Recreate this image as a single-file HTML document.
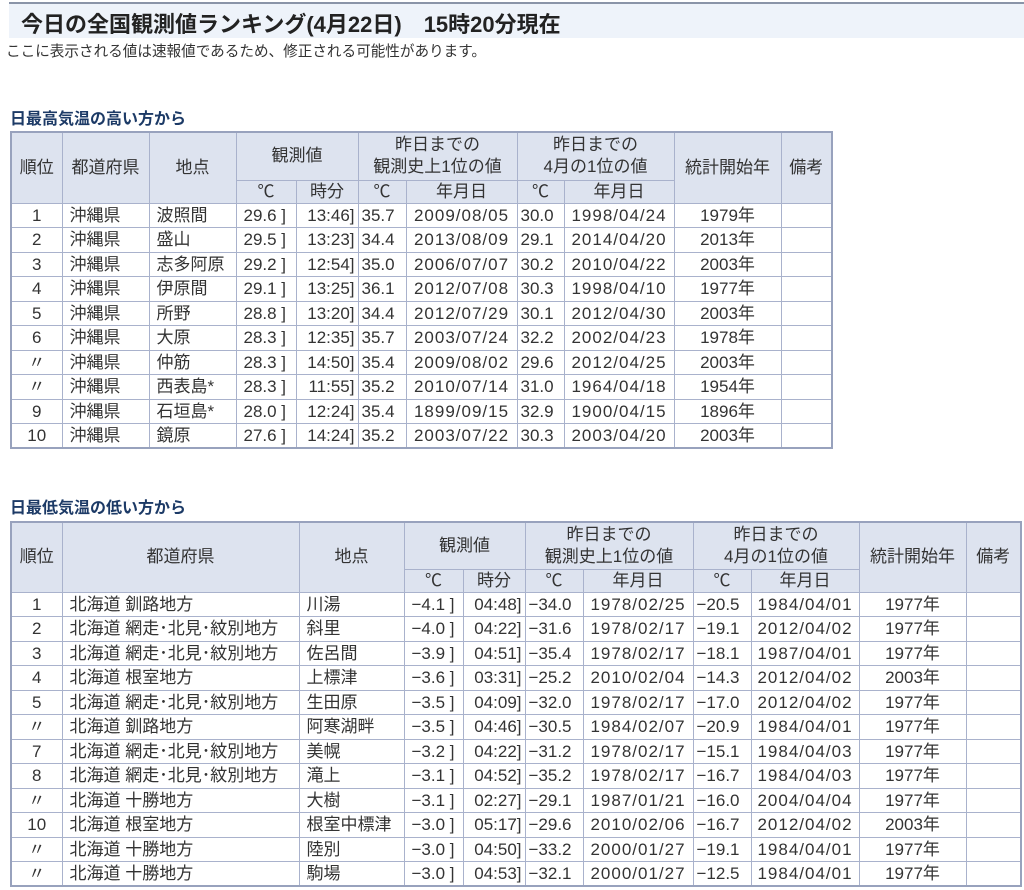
<!DOCTYPE html>
<html><head><meta charset="utf-8"><style>
body{margin:0;background:#fff;font-family:"Liberation Sans","Noto Sans CJK JP",sans-serif;color:#333;width:1024px;height:890px;overflow:hidden;position:relative}
.hd{position:absolute;left:9px;top:2px;width:1015px;height:36px;background:#eef3fa;border-top:2px solid #8a94a8;box-sizing:border-box}
.hd span{position:absolute;left:12px;top:3px;font-size:22px;font-weight:bold;color:#222;white-space:nowrap}
.note{position:absolute;left:6px;top:40px;font-size:14.6px;white-space:nowrap}
.st{position:absolute;left:10px;font-size:16px;font-weight:bold;color:#1c3a66;white-space:nowrap}
table{position:absolute;left:10px;border-collapse:collapse;table-layout:fixed;border:2px solid #98a2bd;font-size:17px}
td,th{border:1px solid #a9b2cc;padding:0;white-space:nowrap;overflow:hidden;box-sizing:border-box}
th{background:#dde3ef;font-weight:normal;text-align:center;line-height:22px}
td{height:24.5px;line-height:23px}
.c{text-align:center}.l{padding-left:7px}.r{text-align:right;padding-right:3px}
.d{letter-spacing:1px}
</style></head><body>
<div class="hd"><span>今日の全国観測値ランキング(4月22日)　15時20分現在</span></div>
<div class="note">ここに表示される値は速報値であるため、修正される可能性があります。</div>
<div class="st" style="top:105px">日最高気温の高い方から</div>
<table style="top:131px;width:821px">
<colgroup><col style="width:51px"><col style="width:87px"><col style="width:87px"><col style="width:60px"><col style="width:62px"><col style="width:48px"><col style="width:111px"><col style="width:47px"><col style="width:110px"><col style="width:107px"><col style="width:51px"></colgroup>
<tr style="height:48px"><th rowspan="2">順位</th><th rowspan="2">都道府県</th><th rowspan="2">地点</th><th colspan="2">観測値</th><th colspan="2">昨日までの<br>観測史上1位の値</th><th colspan="2">昨日までの<br>4月の1位の値</th><th rowspan="2">統計開始年</th><th rowspan="2">備考</th></tr>
<tr style="height:23px"><th>℃</th><th>時分</th><th>℃</th><th>年月日</th><th>℃</th><th>年月日</th></tr>
<tr><td class="c">1</td><td class="l">沖縄県</td><td class="l">波照間</td><td class="l">29.6 ]</td><td class="r">13:46]</td><td class="l" style="padding-left:3px">35.7</td><td class="c d">2009/08/05</td><td class="l" style="padding-left:3px">30.0</td><td class="c d">1998/04/24</td><td class="c">1979年</td><td></td></tr>
<tr><td class="c">2</td><td class="l">沖縄県</td><td class="l">盛山</td><td class="l">29.5 ]</td><td class="r">13:23]</td><td class="l" style="padding-left:3px">34.4</td><td class="c d">2013/08/09</td><td class="l" style="padding-left:3px">29.1</td><td class="c d">2014/04/20</td><td class="c">2013年</td><td></td></tr>
<tr><td class="c">3</td><td class="l">沖縄県</td><td class="l">志多阿原</td><td class="l">29.2 ]</td><td class="r">12:54]</td><td class="l" style="padding-left:3px">35.0</td><td class="c d">2006/07/07</td><td class="l" style="padding-left:3px">30.2</td><td class="c d">2010/04/22</td><td class="c">2003年</td><td></td></tr>
<tr><td class="c">4</td><td class="l">沖縄県</td><td class="l">伊原間</td><td class="l">29.1 ]</td><td class="r">13:25]</td><td class="l" style="padding-left:3px">36.1</td><td class="c d">2012/07/08</td><td class="l" style="padding-left:3px">30.3</td><td class="c d">1998/04/10</td><td class="c">1977年</td><td></td></tr>
<tr><td class="c">5</td><td class="l">沖縄県</td><td class="l">所野</td><td class="l">28.8 ]</td><td class="r">13:20]</td><td class="l" style="padding-left:3px">34.4</td><td class="c d">2012/07/29</td><td class="l" style="padding-left:3px">30.1</td><td class="c d">2012/04/30</td><td class="c">2003年</td><td></td></tr>
<tr><td class="c">6</td><td class="l">沖縄県</td><td class="l">大原</td><td class="l">28.3 ]</td><td class="r">12:35]</td><td class="l" style="padding-left:3px">35.7</td><td class="c d">2003/07/24</td><td class="l" style="padding-left:3px">32.2</td><td class="c d">2002/04/23</td><td class="c">1978年</td><td></td></tr>
<tr><td class="c">〃</td><td class="l">沖縄県</td><td class="l">仲筋</td><td class="l">28.3 ]</td><td class="r">14:50]</td><td class="l" style="padding-left:3px">35.4</td><td class="c d">2009/08/02</td><td class="l" style="padding-left:3px">29.6</td><td class="c d">2012/04/25</td><td class="c">2003年</td><td></td></tr>
<tr><td class="c">〃</td><td class="l">沖縄県</td><td class="l">西表島*</td><td class="l">28.3 ]</td><td class="r">11:55]</td><td class="l" style="padding-left:3px">35.2</td><td class="c d">2010/07/14</td><td class="l" style="padding-left:3px">31.0</td><td class="c d">1964/04/18</td><td class="c">1954年</td><td></td></tr>
<tr><td class="c">9</td><td class="l">沖縄県</td><td class="l">石垣島*</td><td class="l">28.0 ]</td><td class="r">12:24]</td><td class="l" style="padding-left:3px">35.4</td><td class="c d">1899/09/15</td><td class="l" style="padding-left:3px">32.9</td><td class="c d">1900/04/15</td><td class="c">1896年</td><td></td></tr>
<tr><td class="c">10</td><td class="l">沖縄県</td><td class="l">鏡原</td><td class="l">27.6 ]</td><td class="r">14:24]</td><td class="l" style="padding-left:3px">35.2</td><td class="c d">2003/07/22</td><td class="l" style="padding-left:3px">30.3</td><td class="c d">2003/04/20</td><td class="c">2003年</td><td></td></tr>
</table>
<div class="st" style="top:494px">日最低気温の低い方から</div>
<table style="top:521px;width:1010px">
<colgroup><col style="width:51px"><col style="width:237px"><col style="width:105px"><col style="width:59px"><col style="width:62px"><col style="width:58px"><col style="width:110px"><col style="width:58px"><col style="width:108px"><col style="width:107px"><col style="width:55px"></colgroup>
<tr style="height:47px"><th rowspan="2">順位</th><th rowspan="2">都道府県</th><th rowspan="2">地点</th><th colspan="2">観測値</th><th colspan="2">昨日までの<br>観測史上1位の値</th><th colspan="2">昨日までの<br>4月の1位の値</th><th rowspan="2">統計開始年</th><th rowspan="2">備考</th></tr>
<tr style="height:23px"><th>℃</th><th>時分</th><th>℃</th><th>年月日</th><th>℃</th><th>年月日</th></tr>
<tr><td class="c">1</td><td class="l">北海道 釧路地方</td><td class="l">川湯</td><td class="l">−4.1 ]</td><td class="r">04:48]</td><td class="l" style="padding-left:3px">−34.0</td><td class="c d">1978/02/25</td><td class="l" style="padding-left:3px">−20.5</td><td class="c d">1984/04/01</td><td class="c">1977年</td><td></td></tr>
<tr><td class="c">2</td><td class="l">北海道 網走･北見･紋別地方</td><td class="l">斜里</td><td class="l">−4.0 ]</td><td class="r">04:22]</td><td class="l" style="padding-left:3px">−31.6</td><td class="c d">1978/02/17</td><td class="l" style="padding-left:3px">−19.1</td><td class="c d">2012/04/02</td><td class="c">1977年</td><td></td></tr>
<tr><td class="c">3</td><td class="l">北海道 網走･北見･紋別地方</td><td class="l">佐呂間</td><td class="l">−3.9 ]</td><td class="r">04:51]</td><td class="l" style="padding-left:3px">−35.4</td><td class="c d">1978/02/17</td><td class="l" style="padding-left:3px">−18.1</td><td class="c d">1987/04/01</td><td class="c">1977年</td><td></td></tr>
<tr><td class="c">4</td><td class="l">北海道 根室地方</td><td class="l">上標津</td><td class="l">−3.6 ]</td><td class="r">03:31]</td><td class="l" style="padding-left:3px">−25.2</td><td class="c d">2010/02/04</td><td class="l" style="padding-left:3px">−14.3</td><td class="c d">2012/04/02</td><td class="c">2003年</td><td></td></tr>
<tr><td class="c">5</td><td class="l">北海道 網走･北見･紋別地方</td><td class="l">生田原</td><td class="l">−3.5 ]</td><td class="r">04:09]</td><td class="l" style="padding-left:3px">−32.0</td><td class="c d">1978/02/17</td><td class="l" style="padding-left:3px">−17.0</td><td class="c d">2012/04/02</td><td class="c">1977年</td><td></td></tr>
<tr><td class="c">〃</td><td class="l">北海道 釧路地方</td><td class="l">阿寒湖畔</td><td class="l">−3.5 ]</td><td class="r">04:46]</td><td class="l" style="padding-left:3px">−30.5</td><td class="c d">1984/02/07</td><td class="l" style="padding-left:3px">−20.9</td><td class="c d">1984/04/01</td><td class="c">1977年</td><td></td></tr>
<tr><td class="c">7</td><td class="l">北海道 網走･北見･紋別地方</td><td class="l">美幌</td><td class="l">−3.2 ]</td><td class="r">04:22]</td><td class="l" style="padding-left:3px">−31.2</td><td class="c d">1978/02/17</td><td class="l" style="padding-left:3px">−15.1</td><td class="c d">1984/04/03</td><td class="c">1977年</td><td></td></tr>
<tr><td class="c">8</td><td class="l">北海道 網走･北見･紋別地方</td><td class="l">滝上</td><td class="l">−3.1 ]</td><td class="r">04:52]</td><td class="l" style="padding-left:3px">−35.2</td><td class="c d">1978/02/17</td><td class="l" style="padding-left:3px">−16.7</td><td class="c d">1984/04/03</td><td class="c">1977年</td><td></td></tr>
<tr><td class="c">〃</td><td class="l">北海道 十勝地方</td><td class="l">大樹</td><td class="l">−3.1 ]</td><td class="r">02:27]</td><td class="l" style="padding-left:3px">−29.1</td><td class="c d">1987/01/21</td><td class="l" style="padding-left:3px">−16.0</td><td class="c d">2004/04/04</td><td class="c">1977年</td><td></td></tr>
<tr><td class="c">10</td><td class="l">北海道 根室地方</td><td class="l">根室中標津</td><td class="l">−3.0 ]</td><td class="r">05:17]</td><td class="l" style="padding-left:3px">−29.6</td><td class="c d">2010/02/06</td><td class="l" style="padding-left:3px">−16.7</td><td class="c d">2012/04/02</td><td class="c">2003年</td><td></td></tr>
<tr><td class="c">〃</td><td class="l">北海道 十勝地方</td><td class="l">陸別</td><td class="l">−3.0 ]</td><td class="r">04:50]</td><td class="l" style="padding-left:3px">−33.2</td><td class="c d">2000/01/27</td><td class="l" style="padding-left:3px">−19.1</td><td class="c d">1984/04/01</td><td class="c">1977年</td><td></td></tr>
<tr><td class="c">〃</td><td class="l">北海道 十勝地方</td><td class="l">駒場</td><td class="l">−3.0 ]</td><td class="r">04:53]</td><td class="l" style="padding-left:3px">−32.1</td><td class="c d">2000/01/27</td><td class="l" style="padding-left:3px">−12.5</td><td class="c d">1984/04/01</td><td class="c">1977年</td><td></td></tr>
</table>
</body></html>
